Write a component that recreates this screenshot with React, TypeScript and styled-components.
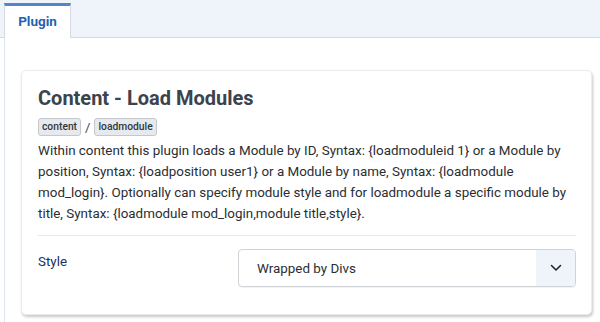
import React from "react";
import styled, { createGlobalStyle } from "styled-components";

const Global = createGlobalStyle`
  html, body { margin: 0; padding: 0; background: #ffffff; }
  body { font-family: Roboto, "Noto Sans", "Liberation Sans", sans-serif; color: #22262a; }
  * { box-sizing: border-box; }
`;

const Page = styled.div`
  width: 600px;
  height: 322px;
  overflow: hidden;
  display: flex;
  flex-direction: column;
`;

const TabBar = styled.div`
  height: 38px;
  flex: none;
  display: flex;
  align-items: flex-end;
  padding-left: 4px;
  background: #eff3fa;
  border-bottom: 1px solid #d3dae6;
`;

const Tab = styled.div`
  height: 35px;
  width: 67px;
  margin-bottom: -1px;
  display: flex;
  align-items: center;
  justify-content: center;
  background: #ffffff;
  border-top: 3px solid #5584c9;
  border-left: 1px solid #d3dae6;
  border-right: 1px solid #d3dae6;
  color: #2262b2;
  font-weight: 700;
  font-size: 13.5px;
  padding-bottom: 2px;
`;

const Panel = styled.div`
  flex: 1;
  margin-left: 4px;
  border-left: 1px solid #dfe5f0;
  padding: 32px 8px 0 16px;
`;

const Card = styled.div`
  background: #ffffff;
  border-radius: 5px;
  border: 1px solid #ececec;
  box-shadow: 1px 2px 3px rgba(0, 0, 0, 0.22);
  padding: 13px 15px 27px 16px;
`;

const Title = styled.h2`
  margin: 0;
  font-size: 20px;
  line-height: 28px;
  font-weight: 700;
  color: #3b434c;
`;

const Tags = styled.div`
  display: flex;
  align-items: center;
  gap: 4px;
  margin-top: 6px;
  color: #444;
  font-size: 13px;
`;

const Badge = styled.span`
  display: inline-block;
  font-size: 10.3px;
  font-weight: 500;
  line-height: 16px;
  padding: 0 3px;
  border: 1px solid #c4c8cc;
  border-radius: 3px;
  background: #e6e9ed;
  color: #33383d;
`;

const Description = styled.p`
  margin: 4px 0 0;
  font-size: 13.4px;
  line-height: 21px;
  color: #2a2e33;
  white-space: nowrap;
`;

const Divider = styled.hr`
  margin: 11px 0 13px;
  border: 0;
  border-top: 1px solid #e6e8eb;
`;

const FieldRow = styled.div`
  display: grid;
  grid-template-columns: 200px 1fr;
  align-items: start;
`;

const Label = styled.label`
  font-size: 13.4px;
  line-height: 16px;
  color: #22305a;
  padding-top: 5px;
`;

const Select = styled.div`
  height: 38px;
  display: flex;
  align-items: stretch;
  border: 1px solid #cfd3d8;
  border-radius: 4px;
  overflow: hidden;
  box-shadow: 0 1px 1px rgba(0, 0, 0, 0.05);
`;

const SelectValue = styled.div`
  flex: 1;
  display: flex;
  align-items: center;
  padding-left: 18px;
  font-size: 13.4px;
  color: #2a2e33;
`;

const Chevron = styled.div`
  width: 39px;
  display: flex;
  align-items: center;
  justify-content: center;
  background: #eff3fa;
`;

const lines = [
  "Within content this plugin loads a Module by ID, Syntax: {loadmoduleid 1} or a Module by",
  "position, Syntax: {loadposition user1} or a Module by name, Syntax: {loadmodule",
  "mod_login}. Optionally can specify module style and for loadmodule a specific module by",
  "title, Syntax: {loadmodule mod_login,module title,style}.",
];

export default function App() {
  return (
    <>
      <Global />
      <Page>
        <TabBar>
          <Tab>Plugin</Tab>
        </TabBar>
        <Panel>
          <Card>
            <Title>Content - Load Modules</Title>
            <Tags>
              <Badge>content</Badge>
              <span>/</span>
              <Badge>loadmodule</Badge>
            </Tags>
            <Description>
              {lines.map((l, i) => (
                <React.Fragment key={i}>
                  {l}
                  {i < lines.length - 1 && <br />}
                </React.Fragment>
              ))}
            </Description>
            <Divider />
            <FieldRow>
              <Label>Style</Label>
              <Select>
                <SelectValue>Wrapped by Divs</SelectValue>
                <Chevron>
                  <svg width="12" height="8" viewBox="0 0 12 8" fill="none">
                    <path d="M1.5 1.5 L6 6 L10.5 1.5" stroke="#22262a" strokeWidth="1.6" strokeLinecap="round" strokeLinejoin="round" />
                  </svg>
                </Chevron>
              </Select>
            </FieldRow>
          </Card>
        </Panel>
      </Page>
    </>
  );
}
